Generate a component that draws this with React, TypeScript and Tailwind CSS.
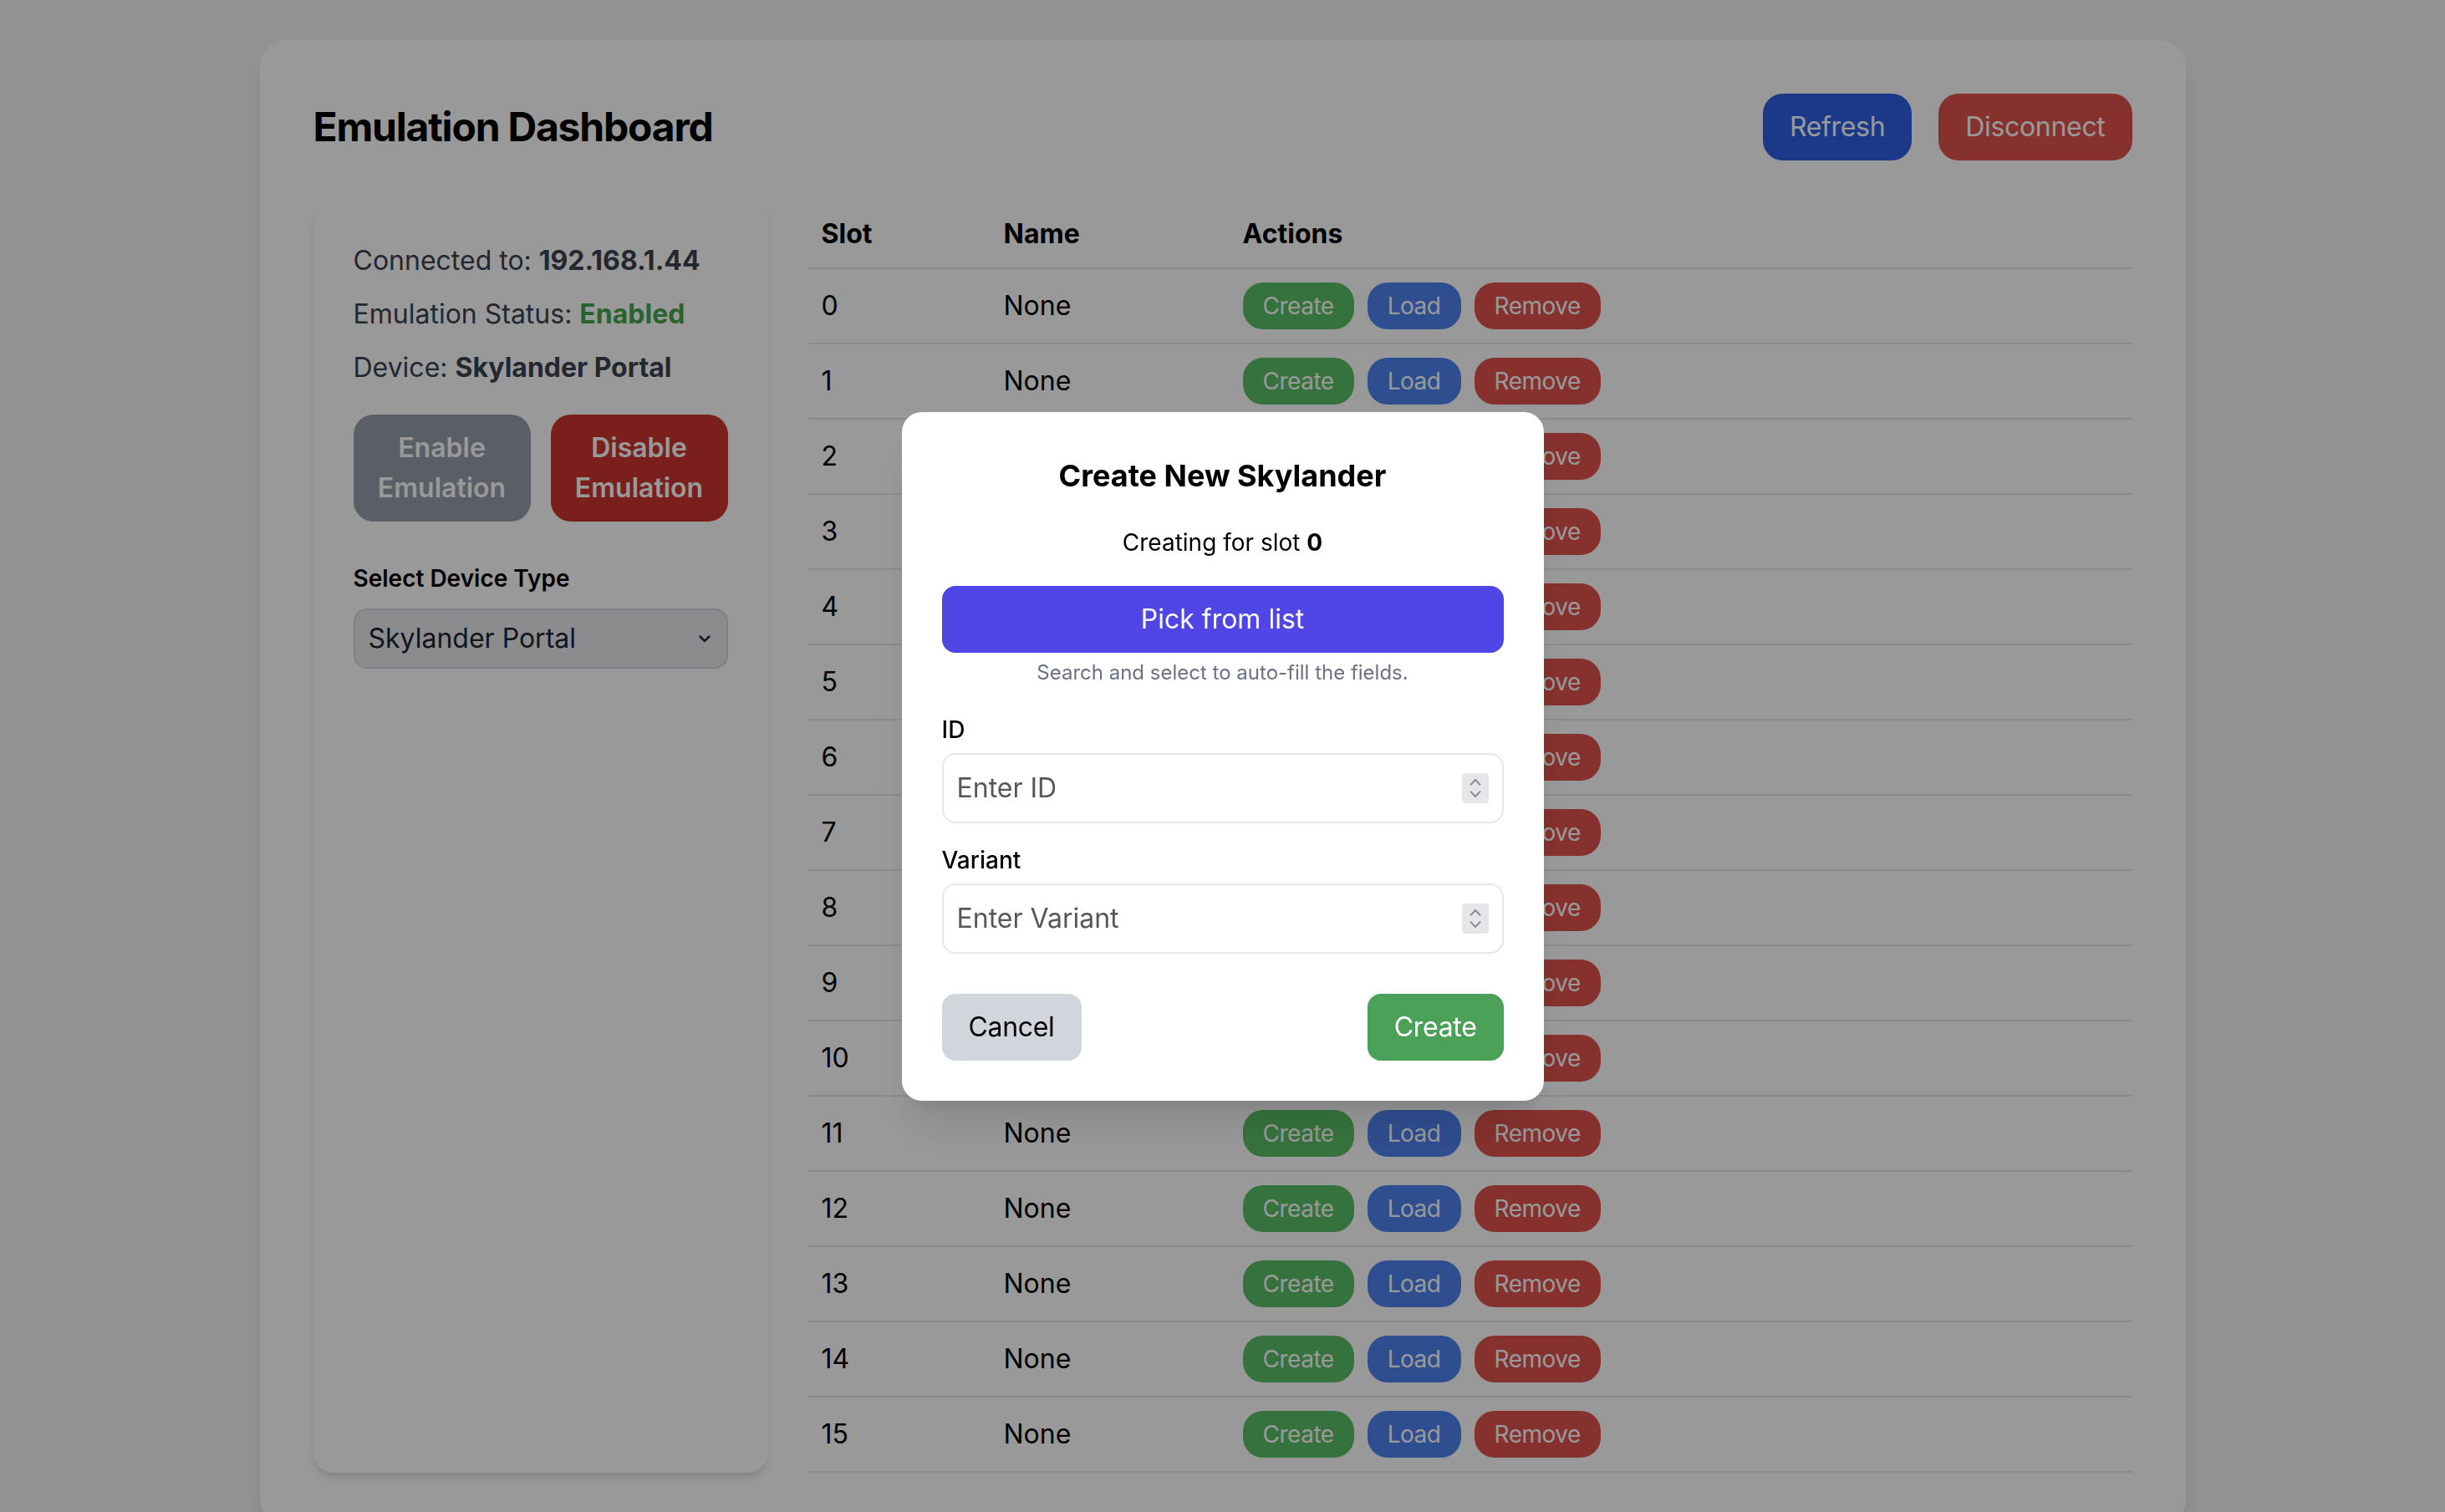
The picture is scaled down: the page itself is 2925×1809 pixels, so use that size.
import React from "react";

const slots = Array.from({ length: 16 }, (_, i) => ({ slot: i, name: "None" }));

function Spinner() {
  return (
    <div className="flex h-[18px] w-[16px] flex-col items-center justify-center gap-[2px] rounded-[2px] bg-[#e6e6ea]">
      <svg width="8" height="5" viewBox="0 0 8 5" fill="none">
        <path d="M1 4.2 4 1l3 3.2" stroke="#8a8a90" strokeWidth="1" />
      </svg>
      <svg width="8" height="5" viewBox="0 0 8 5" fill="none">
        <path d="M1 0.8 4 4l3-3.2" stroke="#8a8a90" strokeWidth="1" />
      </svg>
    </div>
  );
}

function NumberField({ label, placeholder }: { label: string; placeholder: string }) {
  return (
    <div>
      <label className="mb-1 block text-sm font-medium text-black">{label}</label>
      <div className="flex items-center rounded-lg border border-gray-200 py-2 pl-2 pr-2">
        <input
          type="text"
          placeholder={placeholder}
          className="min-w-0 flex-1 bg-transparent text-base text-black outline-none placeholder:text-[#55575c]"
        />
        <Spinner />
      </div>
    </div>
  );
}

function CreateModal() {
  return (
    <div className="fixed inset-0 flex items-center justify-center bg-black/40">
      <div className="w-96 rounded-xl bg-white p-6 shadow-xl">
        <h2 className="mb-4 text-center text-lg leading-7 font-bold text-black">Create New Skylander</h2>
        <p className="mb-4 text-center text-sm text-black">
          Creating for slot <span className="font-bold">0</span>
        </p>

        {/* Picker */}
        <div className="mb-4">
          <button className="w-full rounded-lg bg-[#4f46e5] py-2 text-base text-white">Pick from list</button>
          <p className="mt-1 text-center text-xs text-gray-500">Search and select to auto-fill the fields.</p>
        </div>

        <div className="mb-3">
          <NumberField label="ID" placeholder="Enter ID" />
        </div>
        <NumberField label="Variant" placeholder="Enter Variant" />

        <div className="mt-6 flex justify-between">
          <button className="rounded-lg bg-gray-300 px-4 py-2 text-base tracking-[-0.01em] text-black">Cancel</button>
          <button className="rounded-lg bg-[#4ca158] px-4 py-2 text-base tracking-[-0.01em] text-white">Create</button>
        </div>
      </div>
    </div>
  );
}

export default function App() {
  return (
    <div className="bg-[#f3f4f6] p-6 font-['Inter',sans-serif] [zoom:2]">
      <div className="mx-auto max-w-6xl rounded-2xl bg-white p-8 shadow-lg">
        {/* Header */}
        <div className="mb-6 flex items-center justify-between">
          <h1 className="text-2xl font-bold tracking-tight text-black">Emulation Dashboard</h1>
          <div className="flex gap-4">
            <button className="rounded-xl bg-[#2d5fe3] px-4 py-2 text-base tracking-[-0.01em] text-white">Refresh</button>
            <button className="rounded-xl bg-[#df534d] px-4 py-2 text-base tracking-[-0.01em] text-white">Disconnect</button>
          </div>
        </div>

        <div className="flex gap-6">
          {/* Status panel */}
          <div className="w-1/4 rounded-xl bg-white p-6 shadow-md">
            <div className="space-y-2 text-base text-[#3b4150]">
              <p>
                Connected to: <span className="font-bold">192.168.1.44</span>
              </p>
              <p>
                Emulation Status: <span className="font-bold text-[#46a550]">Enabled</span>
              </p>
              <p>
                Device: <span className="font-bold">Skylander Portal</span>
              </p>
            </div>

            <div className="mt-4 flex gap-3">
              <button className="flex-1 rounded-xl bg-[#969dab] px-2 py-2 text-base font-semibold text-white">
                Enable Emulation
              </button>
              <button className="flex-1 rounded-xl bg-[#cb352f] px-2 py-2 text-base font-semibold text-white">
                Disable Emulation
              </button>
            </div>

            <label className="mb-2 mt-6 block text-sm font-semibold text-black">Select Device Type</label>
            <div className="relative">
              <select className="h-9 w-full appearance-none rounded-lg border border-gray-300 bg-[#e9e9ed] pl-2 text-base text-[#1f2430] outline-none">
                <option>Skylander Portal</option>
              </select>
              <svg
                className="pointer-events-none absolute right-2.5 top-1/2 -translate-y-1/2"
                width="8"
                height="5"
                viewBox="0 0 8 5"
                fill="none"
              >
                <path d="M1 1l3 3 3-3" stroke="#1f2430" strokeWidth="1.3" />
              </svg>
            </div>
          </div>

          {/* Slots table */}
          <div className="flex-1">
            <table className="w-full text-left">
              <thead>
                <tr className="border-b border-gray-200">
                  <th className="w-[109px] px-2 py-2 font-bold text-black">Slot</th>
                  <th className="w-[143px] px-2 py-2 font-bold text-black">Name</th>
                  <th className="px-2 py-2 font-bold text-black">Actions</th>
                </tr>
              </thead>
              <tbody>
                {slots.map((s) => (
                  <tr key={s.slot} className="border-b border-gray-200">
                    <td className="px-2 py-2 text-black">{s.slot}</td>
                    <td className="px-2 py-2 text-black">{s.name}</td>
                    <td className="px-2 py-2">
                      <div className="flex gap-2 tracking-[-0.015em]">
                        <button className="rounded-xl bg-[#5abf68] px-3 py-1 text-sm text-white">Create</button>
                        <button className="rounded-xl bg-[#4f82f0] px-3 py-1 text-sm text-white">Load</button>
                        <button className="rounded-xl bg-[#df534d] px-3 py-1 text-sm text-white">Remove</button>
                      </div>
                    </td>
                  </tr>
                ))}
              </tbody>
            </table>
          </div>
        </div>
      </div>

      <CreateModal />
    </div>
  );
}
